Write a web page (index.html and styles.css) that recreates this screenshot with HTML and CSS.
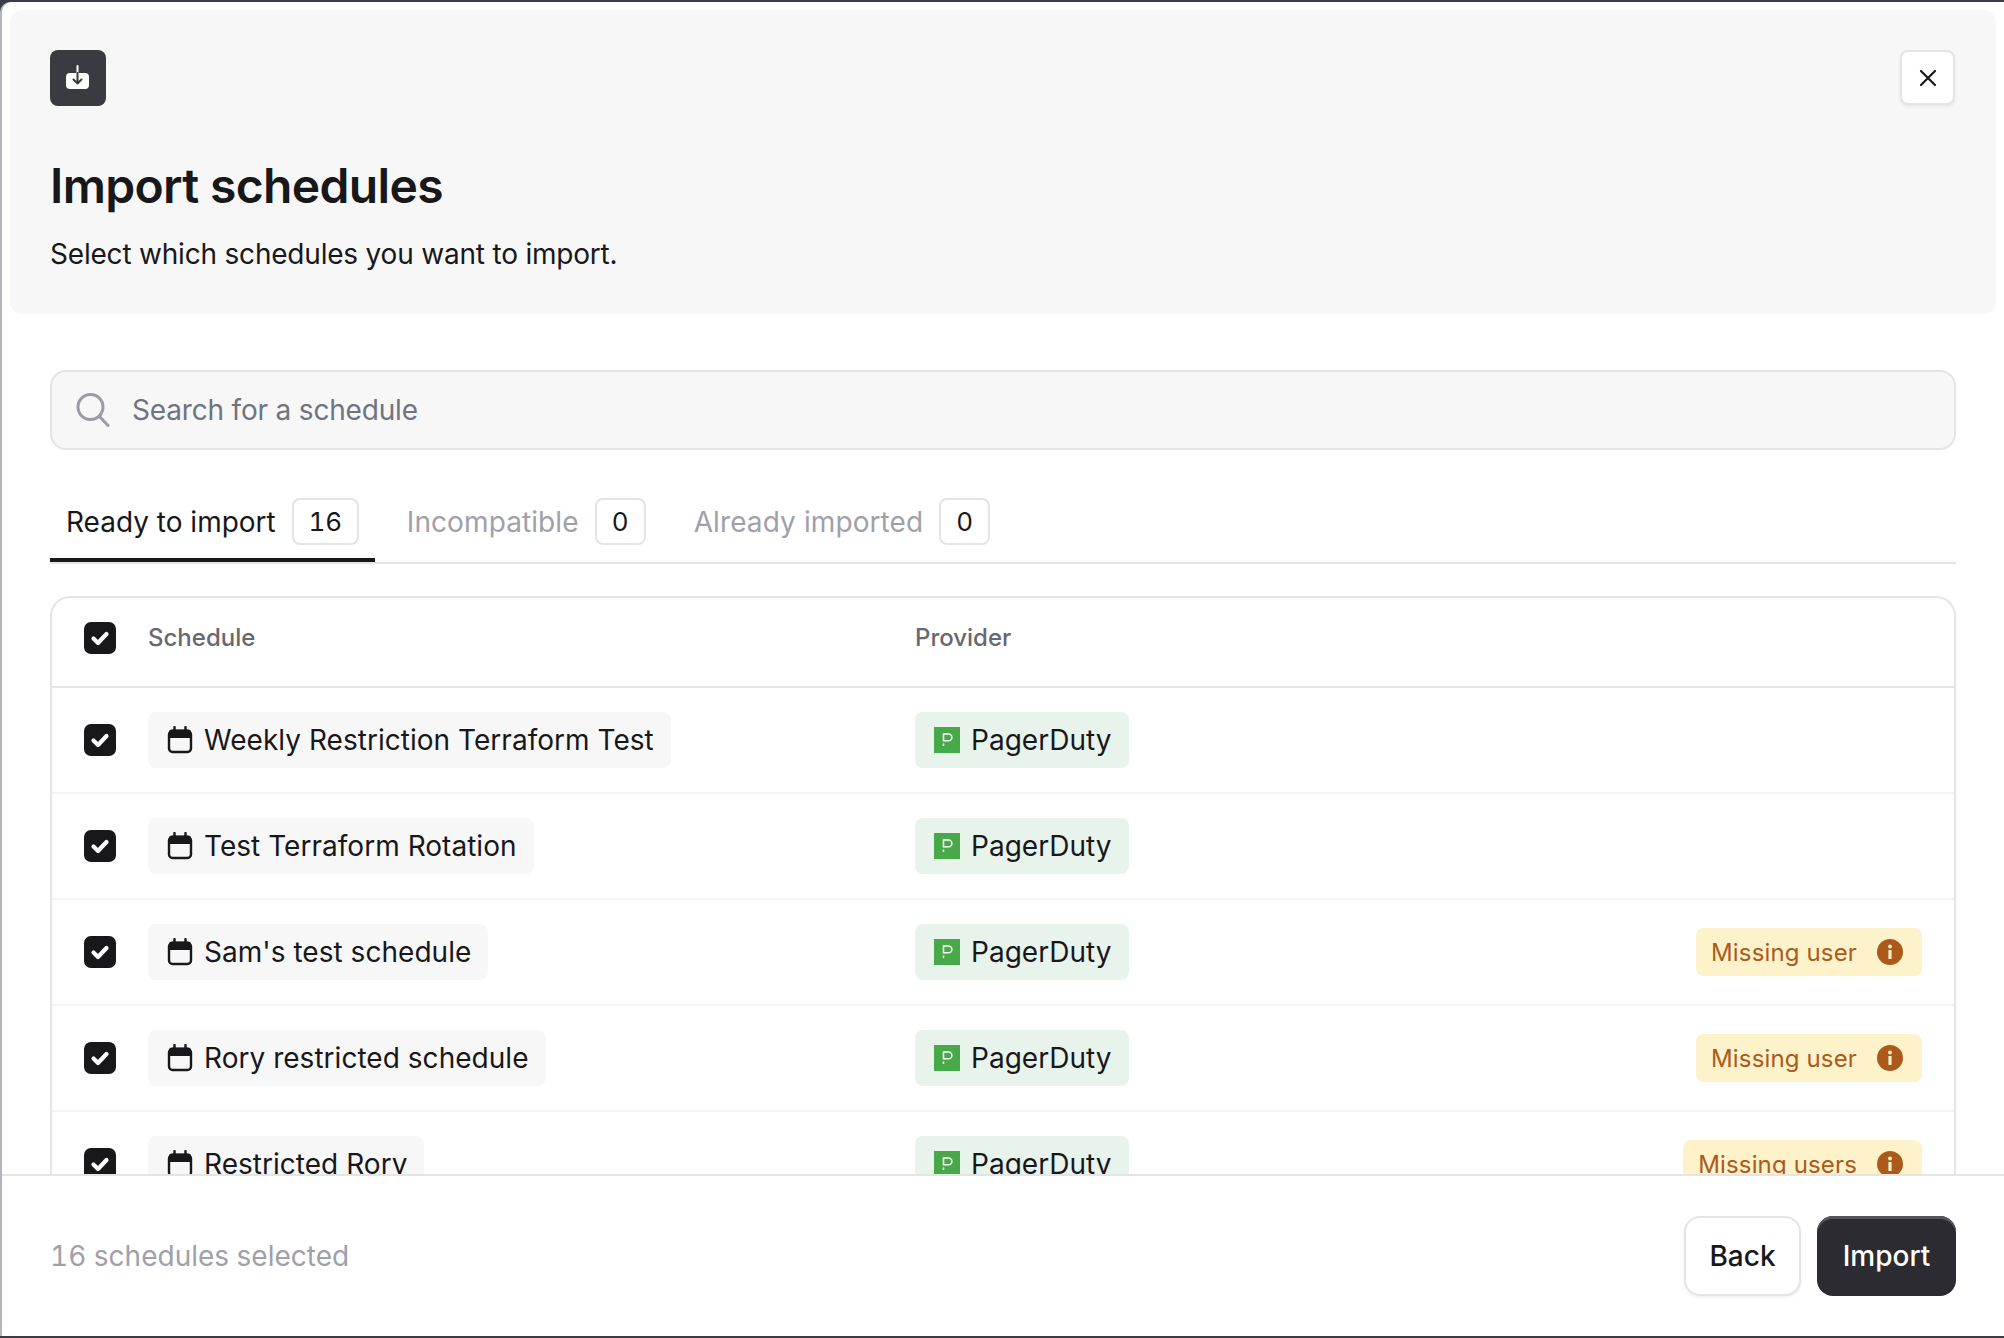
FILE: index.html
```html
<!DOCTYPE html>
<html lang="en">
<head>
<meta charset="utf-8">
<title>Import schedules</title>
<link rel="stylesheet" href="styles.css">
</head>
<body>
<svg class="defs" width="0" height="0" aria-hidden="true">
  <defs>
    <symbol id="cal" viewBox="0 0 26 28">
      <rect x="2" y="5" width="22" height="21" rx="3.5" fill="none" stroke="currentColor" stroke-width="2.4"/>
      <path d="M2 6.5a3 3 0 0 1 3-3h16a3 3 0 0 1 3 3V12H2z" fill="currentColor"/>
      <path d="M7.5 1v4M18.500 1v4" stroke="currentColor" stroke-width="2.4" stroke-linecap="round"/>
    </symbol>
    <symbol id="chk" viewBox="0 0 32 32">
      <rect width="32" height="32" rx="7" fill="#18181b"/>
      <path d="M9.500 16.500l4.500 4.500 8.500-9" fill="none" stroke="#fff" stroke-width="4.200" stroke-linecap="round" stroke-linejoin="round"/>
    </symbol>
    <symbol id="pd" viewBox="0 0 26 26">
      <rect width="26" height="26" fill="#48a948"/>
      <path d="M9.500 7h5a3.200 3.200 0 0 1 0 6.800h-5z" fill="none" stroke="#fff" stroke-width="1.500"/>
      <path d="M9.500 16.500v2.500" stroke="#fff" stroke-width="1.500"/>
    </symbol>
    <symbol id="info" viewBox="0 0 26 26">
      <circle cx="13" cy="13" r="13" fill="#ac5a1c"/>
      <rect x="11.400" y="11" width="3.200" height="9" rx=".6" fill="#fdf2c9"/>
      <circle cx="13" cy="7.500" r="1.900" fill="#fdf2c9"/>
    </symbol>
  </defs>
</svg>
<div class="modal">
  <header class="head">
    <div class="head-top">
      <div class="tile">
        <svg width="28" height="28" viewBox="0 0 28 28"><rect x="2" y="9" width="23" height="16" rx="4" fill="#fff"/><path d="M13.500 2v9" stroke="#fff" stroke-width="2" stroke-linecap="round"/><path d="M13.500 9v10M9.500 15.500l4 4 4-4" fill="none" stroke="#3a3a41" stroke-width="2" stroke-linecap="round" stroke-linejoin="round"/></svg>
      </div>
      <button class="close" aria-label="Close">
        <svg width="18" height="18" viewBox="0 0 18 18"><path d="M2 2l14 14M16 2L2 16" stroke="#18181b" stroke-width="2.200" stroke-linecap="round"/></svg>
      </button>
    </div>
    <h1 class="title">Import schedules</h1>
    <p class="sub">Select which schedules you want to import.</p>
  </header>

  <main class="body">
    <div class="search">
      <svg width="36" height="36" viewBox="0 0 36 36"><circle cx="14.500" cy="14" r="12.500" fill="none" stroke="#9b9ba4" stroke-width="3"/><path d="M23.500 23.500l8.500 9" stroke="#9b9ba4" stroke-width="3" stroke-linecap="round"/></svg>
      <span class="placeholder">Search for a schedule</span>
    </div>

    <nav class="tabs">
      <div class="tab active"><span>Ready to import</span><span class="count wide">16</span></div>
      <div class="tab"><span>Incompatible</span><span class="count">0</span></div>
      <div class="tab"><span>Already imported</span><span class="count">0</span></div>
    </nav>

    <section class="table">
      <div class="row hdr">
        <svg class="check"><use href="#chk"/></svg>
        <span class="hname">Schedule</span>
        <span class="hprov">Provider</span>
      </div>
      <div class="row">
        <svg class="check"><use href="#chk"/></svg>
        <div class="cell"><span class="chip"><svg class="ic"><use href="#cal"/></svg>Weekly Restriction Terraform Test</span></div>
        <div class="cell"><span class="chip green"><svg class="ic"><use href="#pd"/></svg>PagerDuty</span></div>
      </div>
      <div class="row">
        <svg class="check"><use href="#chk"/></svg>
        <div class="cell"><span class="chip"><svg class="ic"><use href="#cal"/></svg>Test Terraform Rotation</span></div>
        <div class="cell"><span class="chip green"><svg class="ic"><use href="#pd"/></svg>PagerDuty</span></div>
      </div>
      <div class="row">
        <svg class="check"><use href="#chk"/></svg>
        <div class="cell"><span class="chip"><svg class="ic"><use href="#cal"/></svg>Sam's test schedule</span></div>
        <div class="cell"><span class="chip green"><svg class="ic"><use href="#pd"/></svg>PagerDuty</span></div>
        <span class="warn">Missing user<svg class="ic"><use href="#info"/></svg></span>
      </div>
      <div class="row">
        <svg class="check"><use href="#chk"/></svg>
        <div class="cell"><span class="chip"><svg class="ic"><use href="#cal"/></svg>Rory restricted schedule</span></div>
        <div class="cell"><span class="chip green"><svg class="ic"><use href="#pd"/></svg>PagerDuty</span></div>
        <span class="warn">Missing user<svg class="ic"><use href="#info"/></svg></span>
      </div>
      <div class="row">
        <svg class="check"><use href="#chk"/></svg>
        <div class="cell"><span class="chip"><svg class="ic"><use href="#cal"/></svg>Restricted Rory</span></div>
        <div class="cell"><span class="chip green"><svg class="ic"><use href="#pd"/></svg>PagerDuty</span></div>
        <span class="warn">Missing users<svg class="ic"><use href="#info"/></svg></span>
      </div>
    </section>
  </main>

  <footer class="foot">
    <span class="selected">16 schedules selected</span>
    <div class="actions">
      <button class="btn back">Back</button>
      <button class="btn primary">Import</button>
    </div>
  </footer>
</div>
</body>
</html>
```
FILE: styles.css
```css
* { box-sizing: border-box; }
html, body { margin: 0; height: 100%; }
body {
  background: #3a3d47;
  font-family: Inter, "Liberation Sans", sans-serif;
  color: #18181b;
  overflow: hidden;
  padding: 2px 0 2px 0;
}
.defs { position: absolute; }
.modal {
  height: 100%;
  margin-left: 2px;
  background: #fff;
  display: flex;
  flex-direction: column;
  border-top-left-radius: 10px;
  box-shadow: -2px 0 0 #b3b6bd;
}
.head {
  margin: 8px 8px 0 8px;
  height: 304px;
  flex: none;
  padding: 40px 41px 0 40px;
  background: #f7f7f7;
  border-radius: 12px;
}
.head-top { display: flex; justify-content: space-between; align-items: flex-start; }
.tile {
  width: 56px; height: 56px;
  background: #3a3a41;
  border-radius: 8px;
  display: flex; align-items: center; justify-content: center;
}
.close {
  width: 55px; height: 55px;
  padding: 0;
  background: #fff;
  border: 2px solid #e4e4e7;
  border-radius: 8px;
  box-shadow: 0 2px 3px rgba(0,0,0,.06);
  display: flex; align-items: center; justify-content: center;
}
.title {
  margin: 50px 0 0;
  font-size: 48px;
  line-height: 60px;
  font-weight: 600;
  letter-spacing: -0.66px;
  color: #18181b;
}
.sub {
  margin: 18px 0 0;
  font-size: 28px;
  line-height: 40px;
  letter-spacing: -0.2px;
  color: #18181b;
}
.body {
  flex: 1;
  min-height: 0;
  overflow: hidden;
  padding: 56px 48px 0;
}
.search {
  height: 80px;
  background: #f7f7f7;
  border: 2px solid #e4e4e7;
  border-radius: 16px;
  display: flex; align-items: center; gap: 20px;
  padding: 0 22px 0 24px;
}
.search svg { margin-top: 2px; }
.placeholder { font-size: 28px; letter-spacing: -0.18px; color: #6f7480; }
.tabs {
  margin-top: 46px;
  display: flex;
  gap: 16px;
  border-bottom: 2px solid #e4e4e7;
  height: 68px;
}
.tab {
  display: flex; gap: 16px; align-items: flex-start;
  padding: 0 16px;
  height: 66px;
  font-size: 28px;
  line-height: 40px;
  letter-spacing: 0.1px;
  color: #a0a0ab;
}
.tab > span:first-child { padding-top: 6px; }
.tab.active { color: #18181b; letter-spacing: 0; border-bottom: 4px solid #18181b; }
.count {
  display: flex; align-items: center; justify-content: center;
  width: 51px; height: 47px;
  margin-top: 2px;
  border: 2px solid #e4e4e7;
  border-radius: 8px;
  font-size: 26px;
  letter-spacing: 0;
  font-feature-settings: "tnum";
  color: #18181b;
}
.count.wide { width: 67px; }
.table {
  margin-top: 32px;
  border: 2px solid #e4e4e7;
  border-bottom: 0;
  border-radius: 20px 20px 0 0;
}
.row {
  display: grid;
  grid-template-columns: 32px 799px 1fr auto;
  column-gap: 0;
  align-items: center;
  padding: 24px 32px;
  border-bottom: 2px solid #f4f4f5;
  height: 106px;
}
.row.hdr { height: 90px; padding: 24px 32px 32px; border-bottom-color: #e4e4e7; }
.check { width: 32px; height: 32px; }
.cell, .hname { grid-column: 2; margin-left: 32px; }
.cell + .cell, .hprov { grid-column: 3; margin-left: 0; }
.hname, .hprov { font-size: 24px; font-weight: 500; color: #68686f; }
.hname, .hprov { position: relative; top: -1px; }
.chip {
  display: inline-flex; align-items: center; gap: 11px;
  height: 56px;
  padding: 0 17px 0 19px;
  background: #f7f7f7;
  border-radius: 8px;
  font-size: 28px;
  font-weight: 400;
  letter-spacing: 0.03px;
  white-space: nowrap;
  color: #18181b;
}
.chip.green { background: #e8f3ec; }
.chip .ic { width: 26px; height: 28px; flex: none; }
.warn {
  grid-column: 4;
  display: inline-flex; align-items: center; gap: 20px;
  height: 48px;
  padding: 0 19px 0 15px;
  background: #fdf2c9;
  border-radius: 8px;
  font-size: 24px;
  font-weight: 400;
  letter-spacing: 0.15px;
  color: #ac5a1c;
  white-space: nowrap;
}
.warn .ic { width: 26px; height: 26px; flex: none; }
.foot {
  flex: none;
  height: 162px;
  border-top: 2px solid #e4e4e7;
  background: #fff;
  padding: 0 48px;
  display: flex; align-items: center; justify-content: space-between;
}
.selected { font-size: 28px; font-feature-settings: "tnum"; color: #a0a0ab; }
.actions { display: flex; gap: 16px; align-items: center; }
.btn {
  height: 80px;
  font-family: inherit;
  font-size: 28px;
  font-weight: 500;
  border-radius: 16px;
  padding: 0;
}
.back {
  width: 117px;
  background: #fff;
  border: 2px solid #e4e4e7;
  color: #18181b;
  box-shadow: 0 2px 3px rgba(0,0,0,.06);
}
.primary {
  width: 139px;
  background: #2b2b31;
  border: 0;
  color: #fff;
  box-shadow: inset 0 3px 0 #55555c;
}
```
